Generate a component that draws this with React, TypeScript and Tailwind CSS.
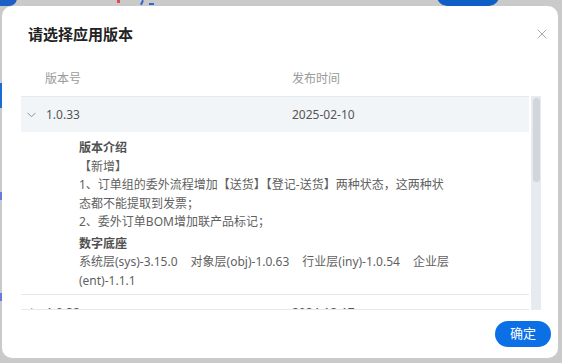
import { X } from "lucide-react"

const font = { fontFamily: '"Noto Sans", "Noto Sans CJK SC", sans-serif' }

function Chevron() {
  return (
    <svg width="9" height="6" viewBox="0 0 9 6" fill="none">
      <path d="M0.5 0.8 L4.5 4.8 L8.5 0.8" stroke="#8a8f99" strokeWidth="1" />
    </svg>
  )
}

function Backdrop() {
  return (
    <>
      <div className="absolute left-0 top-[-8px] w-[17px] h-[14px] rounded-br-[8px] bg-[#1d5fc4]" />
      <div className="absolute left-[117px] top-0 w-[3px] h-[3px] bg-[#e04a4a]" />
      <div className="absolute left-[141px] top-0 w-[2px] h-[5px] bg-[#2a6ad0] rotate-[25deg]" />
      <div className="absolute left-[149px] top-0 w-[5px] h-[5px] border-b-2 border-[#2a6ad0]" />
      <div className="absolute left-[437px] top-[-14px] w-[62px] h-[20px] rounded-full bg-[#0f5fc6]" />
      <div className="absolute left-0 top-[83px] w-[2px] h-[25px] bg-[#1d6ad6]" />
      <div className="absolute left-0 top-[192px] w-[2px] h-[8px] bg-[#6a7ad8]" />
      <div className="absolute left-0 top-[293px] w-[2px] h-[8px] bg-[#6a7ad8]" />
    </>
  )
}

export default function App() {
  return (
    <div className="relative w-[562px] h-[363px] overflow-hidden bg-[#cacaca] pt-[6px] pl-[2px]" style={font}>
      <Backdrop />
      <div className="relative w-[556px] h-[352px] rounded-[10px] bg-white flex flex-col">
        {/* title */}
        <div className="flex items-center justify-between h-[56px] pl-[26px] pr-[8px]">
          <h2 className="text-[15px] font-semibold text-[#222]">请选择应用版本</h2>
          <X size={16} strokeWidth={1.1} className="text-[#8c8c8c]" />
        </div>

        {/* table */}
        <div className="ml-[19px] flex flex-col w-[520px]">
          <div className="flex items-center h-[34px] text-[12px] text-[#9a9a9a] w-[509px]">
            <span className="pl-[24px] w-[271px]">版本号</span>
            <span>发布时间</span>
          </div>
          <div className="flex">
            <div className="w-[509px] h-[214px] overflow-hidden border-b border-[#e4e9ee]">
              <div className="flex items-center h-[36px] bg-[#f2f5f8] border-t border-[#e4e9ee] text-[12px] text-[#555]">
                <span className="w-[25px] pl-[6px] flex items-center">
                  <Chevron />
                </span>
                <span className="w-[246px]">1.0.33</span>
                <span>2025-02-10</span>
              </div>
              <div className="pl-[58px] pt-[7px] pb-[4px] text-[12px] leading-[18.5px] text-[#5f5f5f] border-b border-[#e4e9ee]">
                <div className="w-[372px]">
                  <div className="font-bold text-[#505050]">版本介绍</div>
                  <div>【新增】</div>
                  <div>1、订单组的委外流程增加【送货】【登记-送货】两种状态，这两种状态都不能提取到发票；</div>
                  <div>2、委外订单BOM增加联产品标记；</div>
                  <div className="mt-[3px] font-bold text-[#505050]">数字底座</div>
                  <div>
                    <span className="mr-[13px]">系统层(sys)-3.15.0</span>
                    <span className="mr-[13px]">对象层(obj)-1.0.63</span>
                    <span className="mr-[13px]">行业层(iny)-1.0.54</span>
                    <span>企业层</span>
                    <span>(ent)-1.1.1</span>
                  </div>
                </div>
              </div>
              <div className="flex items-center h-[36px] text-[12px] text-[#555]">
                <span className="w-[25px] pl-[9px] flex items-center rotate-[-90deg]">
                  <Chevron />
                </span>
                <span className="w-[246px]">1.0.32</span>
                <span>2024-12-17</span>
              </div>
            </div>
            <div className="ml-[2px] w-[10px] h-[214px] bg-[#e7eaee] pt-[2px] flex justify-center">
              <div className="w-[7px] h-[84px] rounded-full bg-[#d2d5da]" />
            </div>
          </div>
        </div>

        {/* footer */}
        <div className="flex justify-end pr-[7px] mt-[11px]">
          <button className="w-[56px] h-[26px] rounded-full bg-[#0b6fe6] text-white text-[13px]">确定</button>
        </div>
      </div>
    </div>
  )
}
